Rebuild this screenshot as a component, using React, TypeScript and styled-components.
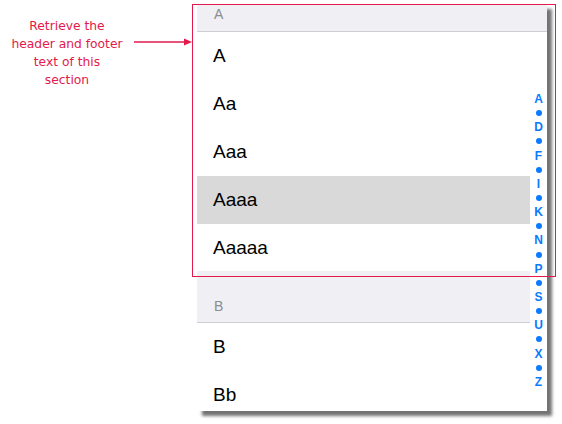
import React from "react";
import styled, { createGlobalStyle } from "styled-components";

const Global = createGlobalStyle`
  html, body { margin: 0; padding: 0; background: #ffffff; }
  body { width: 562px; height: 424px; overflow: hidden; }
`;

const ACCENT = "#e31a4b";

const Page = styled.div`
  position: relative;
  width: 562px;
  height: 424px;
  display: flex;
  align-items: flex-start;
  background: #fff;
`;

const Note = styled.div`
  width: 134px;
  padding-top: 17px;
  text-align: center;
  font-family: "DejaVu Sans", sans-serif;
  font-size: 12.3px;
  line-height: 18px;
  color: ${ACCENT};
`;

const Arrow = styled.svg`
  margin-top: 37px;
  width: 58px;
  height: 10px;
  flex: none;
`;

const Phone = styled.div`
  margin-top: 4px;
  margin-left: 5px;
  width: 350px;
  height: 407px;
  overflow: hidden;
  display: flex;
  flex-direction: column;
  background: #fff;
  box-shadow: 5px 5px 3px rgba(0, 0, 0, 0.55);
  font-family: "Liberation Sans", Arial, sans-serif;
`;

const Header = styled.div<{ $tall?: boolean }>`
  flex: none;
  box-sizing: border-box;
  height: ${(p) => (p.$tall ? 52 : 28)}px;
  background: #efeff4;
  border-bottom: 1px solid #cfced3;
  display: flex;
  align-items: flex-end;
  padding: 0 0 ${(p) => (p.$tall ? 9 : 10)}px 17px;
  font-size: 14px;
  line-height: 14px;
  color: #8c8c91;
`;

const Body = styled.div`
  flex: 1;
  display: flex;
  min-height: 0;
`;

const List = styled.div`
  flex: 1;
  display: flex;
  flex-direction: column;
`;

const Row = styled.div<{ $selected?: boolean; $last?: boolean }>`
  flex: none;
  height: ${(p) => (p.$last ? 47 : 48)}px;
  display: flex;
  align-items: center;
  padding-left: 16px;
  font-size: 19px;
  color: #000;
  background: ${(p) => (p.$selected ? "#d9d9d9" : "#fff")};
`;

const Index = styled.div`
  width: 17px;
  flex: none;
  background: #fff;
  display: flex;
  flex-direction: column;
  align-items: center;
  padding-top: 60px;
`;

const IndexItem = styled.div`
  height: 14.15px;
  line-height: 14.15px;
  font-size: 12px;
  font-weight: bold;
  color: #0a7aff;
  display: flex;
  align-items: center;
  justify-content: center;
`;

const Dot = styled.span`
  width: 6px;
  height: 6px;
  border-radius: 50%;
  background: #0a7aff;
`;

const Frame = styled.div`
  position: absolute;
  left: 192px;
  top: 4px;
  width: 364px;
  height: 273px;
  border: 1px solid ${ACCENT};
  box-sizing: border-box;
  pointer-events: none;
`;

const letters = ["A", "D", "F", "I", "K", "N", "P", "S", "U", "X", "Z"];

export default function App() {
  const indexEntries: React.ReactNode[] = [];
  letters.forEach((l, i) => {
    indexEntries.push(<IndexItem key={l}>{l}</IndexItem>);
    if (i < letters.length - 1)
      indexEntries.push(
        <IndexItem key={l + "-dot"}>
          <Dot />
        </IndexItem>
      );
  });

  return (
    <>
      <Global />
      <Page>
        <Note>
          Retrieve the
          <br />
          header and footer
          <br />
          text of this
          <br />
          section
        </Note>
        <Arrow viewBox="0 0 58 10">
          <line x1="0" y1="5" x2="52" y2="5" stroke={ACCENT} strokeWidth="1.3" />
          <polygon points="58,5 50,1.5 50,8.5" fill={ACCENT} />
        </Arrow>
        <Phone>
          <Header>A</Header>
          <Body>
            <List>
              <Row>A</Row>
              <Row>Aa</Row>
              <Row>Aaa</Row>
              <Row $selected>Aaaa</Row>
              <Row $last>Aaaaa</Row>
              <Header $tall>B</Header>
              <Row>B</Row>
              <Row>Bb</Row>
            </List>
            <Index>{indexEntries}</Index>
          </Body>
        </Phone>
        <Frame />
      </Page>
    </>
  );
}
